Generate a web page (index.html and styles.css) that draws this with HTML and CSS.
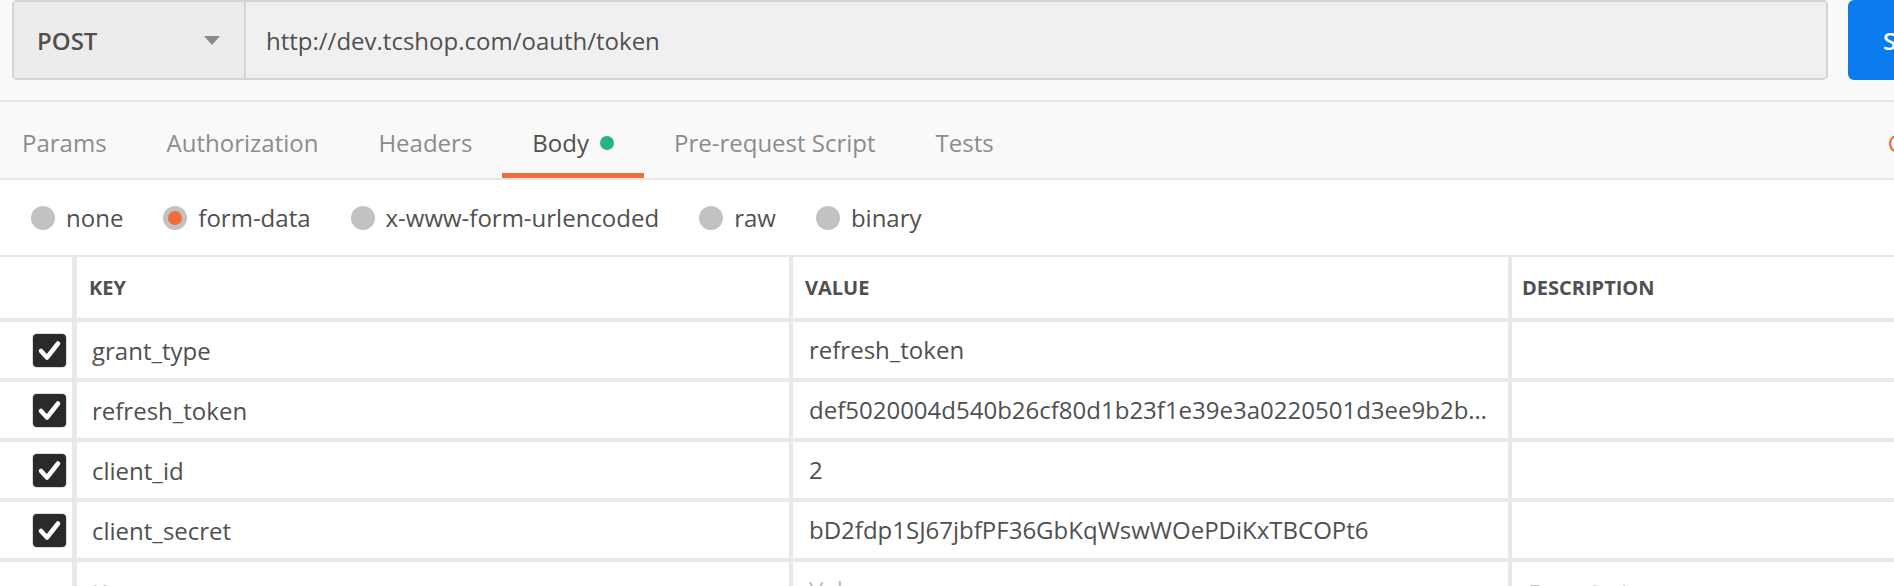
FILE: index.html
```html
<!DOCTYPE html>
<html lang="en">
<head>
<meta charset="utf-8">
<title>Postman request</title>
<link rel="stylesheet" href="styles.css">
</head>
<body>
<div class="app">
  <div class="url-row">
    <div class="url-group">
      <div class="method">
        <span class="method-name">POST</span>
        <span class="caret"></span>
      </div>
      <div class="url-input">http://dev.tcshop.com/oauth/token</div>
    </div>
    <button class="send-btn">Send</button>
  </div>

  <div class="tab-bar">
    <div class="tab first">Params</div>
    <div class="tab">Authorization</div>
    <div class="tab">Headers</div>
    <div class="tab active">Body<span class="dot"></span></div>
    <div class="tab">Pre-request Script</div>
    <div class="tab">Tests</div>
    <div class="tab-links">
      <span class="link">Cookies</span>
      <span class="link">Code</span>
    </div>
  </div>

  <div class="body-types">
    <label class="radio"><span class="circle"></span>none</label>
    <label class="radio"><span class="circle checked"></span>form-data</label>
    <label class="radio"><span class="circle"></span>x-www-form-urlencoded</label>
    <label class="radio"><span class="circle"></span>raw</label>
    <label class="radio"><span class="circle"></span>binary</label>
  </div>

  <div class="kv-table">
    <div class="kv-row head">
      <div class="cell check-cell"></div>
      <div class="cell key-cell">KEY</div>
      <div class="cell value-cell">VALUE</div>
      <div class="cell desc-cell">DESCRIPTION</div>
    </div>
    <div class="kv-row">
      <div class="cell check-cell"><span class="checkbox"><svg viewBox="0 0 33 33" width="33" height="33"><polyline points="8,17 14,23.5 25,9.5" fill="none" stroke="#fff" stroke-width="4.5" stroke-linecap="round" stroke-linejoin="round"/></svg></span></div>
      <div class="cell key-cell">grant_type</div>
      <div class="cell value-cell">refresh_token</div>
      <div class="cell desc-cell"></div>
    </div>
    <div class="kv-row">
      <div class="cell check-cell"><span class="checkbox"><svg viewBox="0 0 33 33" width="33" height="33"><polyline points="8,17 14,23.5 25,9.5" fill="none" stroke="#fff" stroke-width="4.5" stroke-linecap="round" stroke-linejoin="round"/></svg></span></div>
      <div class="cell key-cell">refresh_token</div>
      <div class="cell value-cell">def5020004d540b26cf80d1b23f1e39e3a0220501d3ee9b2b6f1a9c3e0d4b8a7f2e1c5d9b3a6f0e8d7c4b2a1</div>
      <div class="cell desc-cell"></div>
    </div>
    <div class="kv-row">
      <div class="cell check-cell"><span class="checkbox"><svg viewBox="0 0 33 33" width="33" height="33"><polyline points="8,17 14,23.5 25,9.5" fill="none" stroke="#fff" stroke-width="4.5" stroke-linecap="round" stroke-linejoin="round"/></svg></span></div>
      <div class="cell key-cell">client_id</div>
      <div class="cell value-cell">2</div>
      <div class="cell desc-cell"></div>
    </div>
    <div class="kv-row">
      <div class="cell check-cell"><span class="checkbox"><svg viewBox="0 0 33 33" width="33" height="33"><polyline points="8,17 14,23.5 25,9.5" fill="none" stroke="#fff" stroke-width="4.5" stroke-linecap="round" stroke-linejoin="round"/></svg></span></div>
      <div class="cell key-cell">client_secret</div>
      <div class="cell value-cell">bD2fdp1SJ67jbfPF36GbKqWswWOePDiKxTBCOPt6</div>
      <div class="cell desc-cell"></div>
    </div>
    <div class="kv-row placeholder">
      <div class="cell check-cell"></div>
      <div class="cell key-cell">Key</div>
      <div class="cell value-cell">Value</div>
      <div class="cell desc-cell">Description</div>
    </div>
  </div>
</div>
</body>
</html>
```

FILE: styles.css
```css
* { box-sizing: border-box; }

html, body {
  margin: 0;
  padding: 0;
  background: #ffffff;
  overflow: hidden;
}

body {
  font-family: "Open Sans", "DejaVu Sans", sans-serif;
  font-size: 24px;
  color: #505050;
}

.app {
  width: 2090px;
}

/* URL row */
.url-row {
  display: flex;
  height: 100px;
  padding: 0 20px 0 12px;
  background: #fafafa;
}

.url-group {
  flex: 1;
  display: flex;
  height: 80px;
  border: 2px solid #d4d4d4;
  border-radius: 5px;
  overflow: hidden;
}

.method {
  width: 232px;
  display: flex;
  align-items: center;
  justify-content: space-between;
  padding: 0 24px 0 23px;
  background: #ececec;
  border-right: 2px solid #d6d6d6;
}

.method-name {
  font-weight: 600;
  color: #505050;
}

.caret {
  width: 0;
  height: 0;
  border-left: 8px solid transparent;
  border-right: 8px solid transparent;
  border-top: 9px solid #8a8a8a;
}

.url-input {
  flex: 1;
  display: flex;
  align-items: center;
  padding-left: 20px;
  background: #f0f0f0;
  color: #505050;
}

.send-btn {
  margin-left: 20px;
  width: 222px;
  height: 80px;
  border: none;
  border-radius: 6px;
  background: #097bed;
  color: #ffffff;
  font-family: inherit;
  font-size: 24px;
  font-weight: 600;
  text-align: left;
  padding-left: 35px;
}

/* Tabs */
.tab-bar {
  display: flex;
  height: 80px;
  border-top: 2px solid #e6e6e6;
  border-bottom: 2px solid #e6e6e6;
  background: #f9f9f9;
}

.tab {
  display: flex;
  align-items: center;
  height: 76px;
  padding: 9px 30px 0;
  border-bottom: 5px solid transparent;
  color: #8c8c8c;
  white-space: nowrap;
}

.tab.first {
  padding-left: 22px;
}

.tab.active {
  color: #505050;
  border-bottom-color: #f26b3a;
}

.dot {
  display: inline-block;
  width: 14px;
  height: 14px;
  margin-left: 11px;
  margin-top: 2px;
  border-radius: 50%;
  background: #26b47f;
}

.tab-links {
  margin-left: auto;
  display: flex;
  align-items: center;
  gap: 30px;
  padding: 9px 27px 5px 0;
}

.link {
  color: #f26b3a;
}

/* Body type radios */
.body-types {
  display: flex;
  align-items: center;
  gap: 40px;
  height: 77px;
  padding-left: 31px;
  border-bottom: 2px solid #e8e8e8;
  background: #ffffff;
}

.radio {
  display: flex;
  align-items: center;
  gap: 11px;
  color: #505050;
}

.circle {
  width: 24px;
  height: 24px;
  border-radius: 50%;
  background: #c2c2c2;
}

.circle.checked {
  background: #f26b3a;
  border: 5px solid #c2c2c2;
}

/* Key/value table */
.kv-row {
  display: grid;
  grid-template-columns: 72px 717px 719px 1fr;
  height: 60px;
}

.kv-row.head {
  height: 65px;
}

.cell {
  display: flex;
  align-items: center;
  border-bottom: 4px solid #e9e9e9;
  padding-left: 16px;
  white-space: nowrap;
  overflow: hidden;
  min-width: 0;
}

.cell.check-cell {
  padding-left: 33px;
}

.cell.key-cell {
  border-left: 5px solid #e8e8e8;
  padding-left: 15px;
}

.cell.value-cell,
.cell.desc-cell {
  border-left: 4px solid #e8e8e8;
}

.cell.value-cell {
  padding-right: 16px;
  display: block;
  line-height: 56px;
  text-overflow: ellipsis;
}

.head .cell {
  font-size: 20px;
  font-weight: 700;
  padding-left: 12px;
  color: #505050;
}

.head .cell.value-cell {
  line-height: 61px;
}

.head .cell.desc-cell {
  padding-left: 10px;
}

.placeholder .cell {
  color: #bdbdbd;
  border-bottom: none;
}

.checkbox {
  display: block;
  width: 33px;
  height: 33px;
  border-radius: 4px;
  background: #2a2a2a;
  box-shadow: 0 0 0 1px #dcdcdc;
}

.checkbox svg {
  display: block;
}
```
